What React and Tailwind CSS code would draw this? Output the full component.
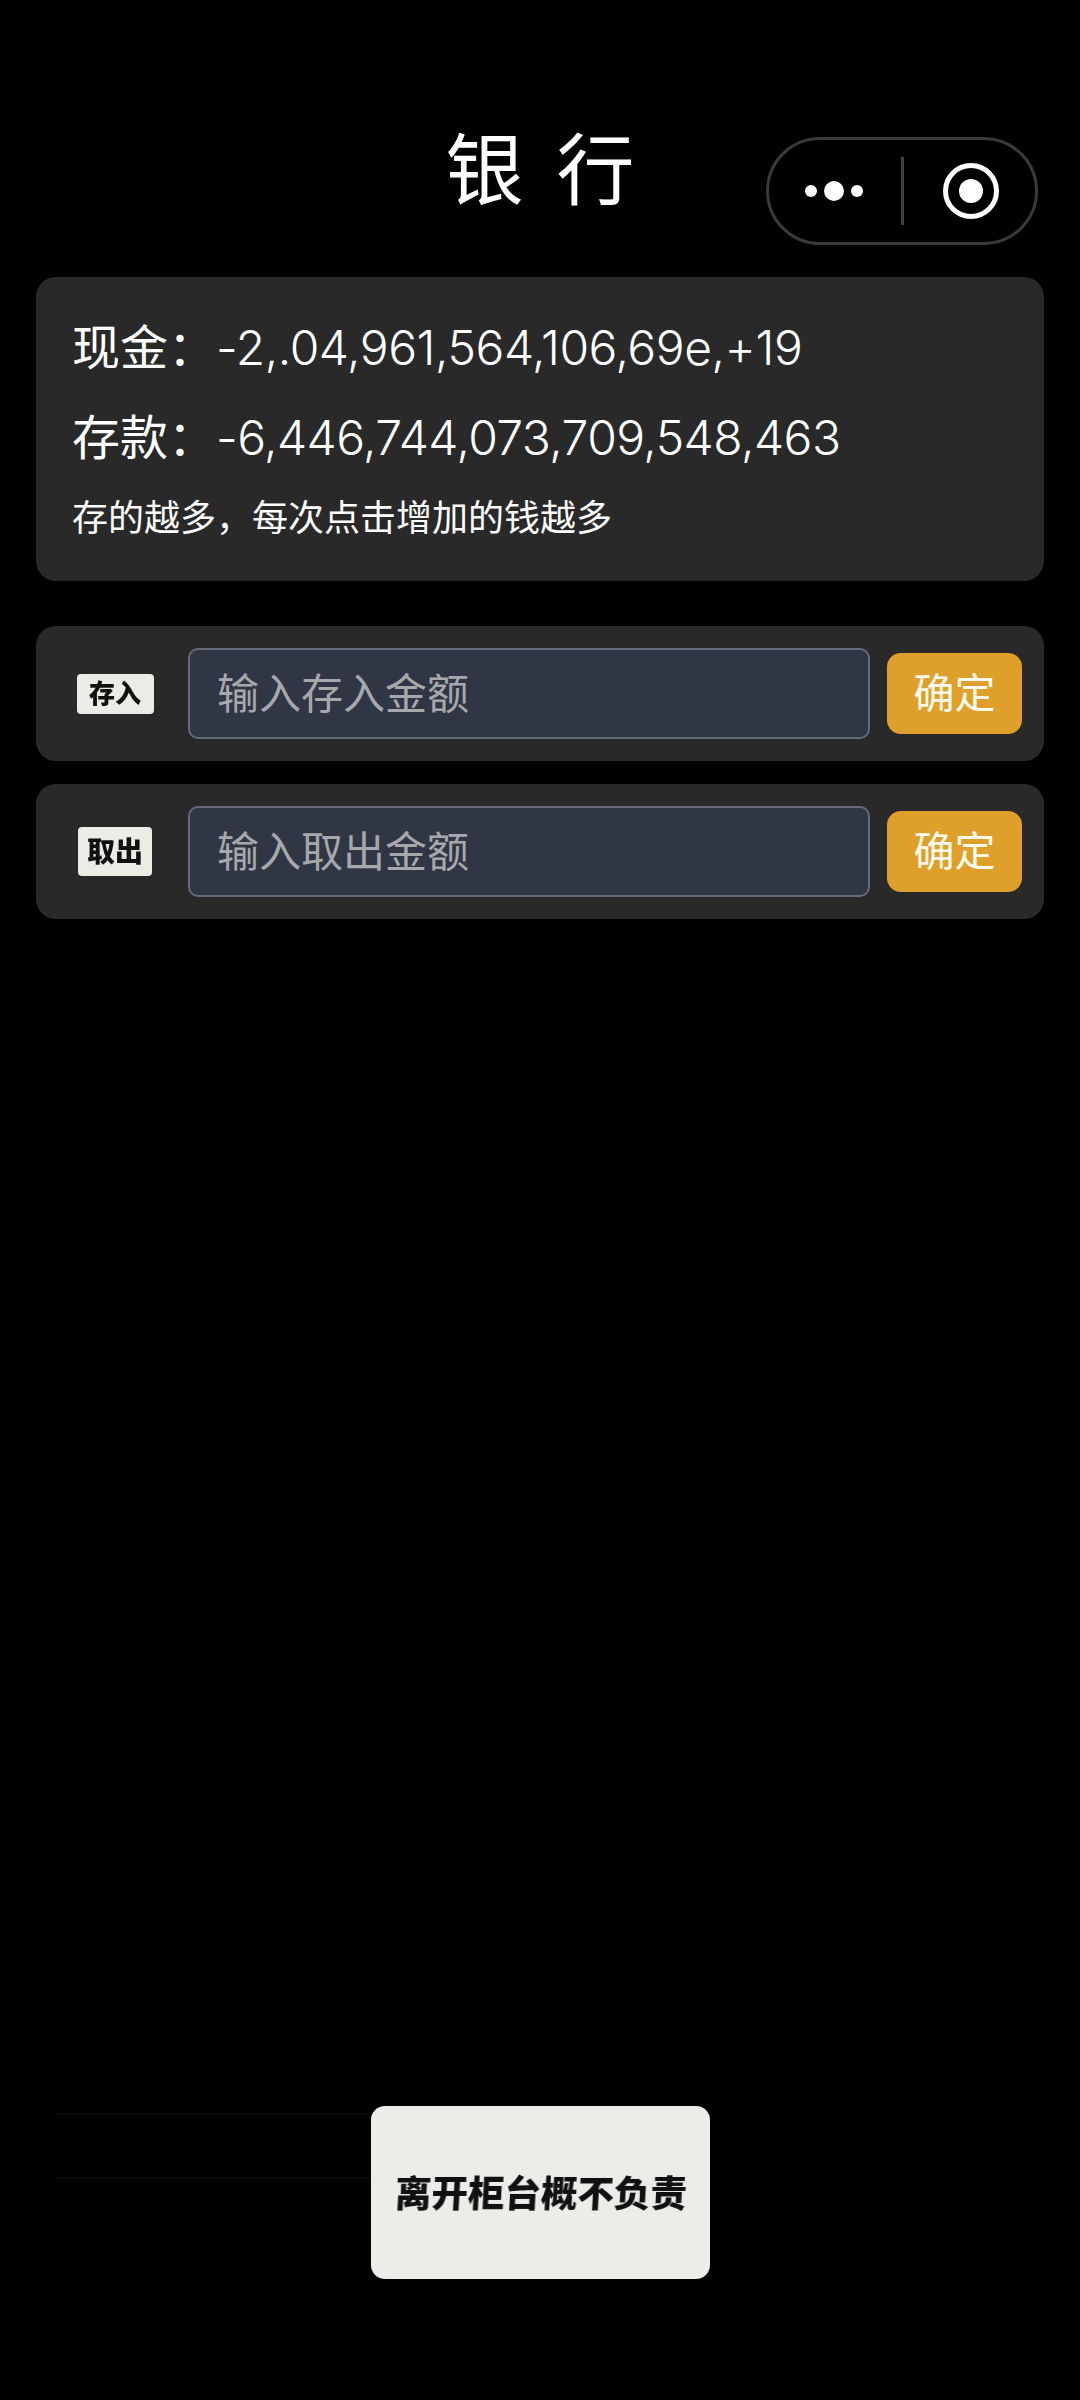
const sans = "font-['Inter','Noto_Sans_CJK_SC',sans-serif]";

function Capsule() {
  return (
    <div className="absolute left-[766px] top-[137px] flex h-[108px] w-[272px] items-center rounded-full border-[3px] border-[#3a3a3a]">
      <svg width="266" height="102" viewBox="0 0 266 102" className="block">
        <circle cx="42" cy="51" r="6" fill="#fff" />
        <circle cx="65" cy="51" r="10" fill="#fff" />
        <circle cx="88" cy="51" r="6" fill="#fff" />
        <rect x="132" y="17" width="3" height="68" fill="#3f3f3f" />
        <circle cx="202" cy="51" r="25.5" fill="none" stroke="#fff" strokeWidth="5" />
        <circle cx="202" cy="51" r="12" fill="#fff" />
      </svg>
    </div>
  );
}

function Row({ label, labelClass, placeholder, className }) {
  return (
    <div className={`flex h-[135px] items-center rounded-[20px] bg-[#292929] pl-[22px] pr-[22px] ${className}`}>
      <div className="flex w-[114px] shrink-0 justify-center">
        <div className={`flex items-center justify-center rounded-[4px] bg-[#ecece6] font-black text-[#111] ${labelClass}`}>
          <span className="blur-[0.4px]">{label}</span>
        </div>
      </div>
      <input
        readOnly
        placeholder={placeholder}
        className={`ml-[16px] h-[91px] w-[682px] shrink-0 rounded-[10px] border-2 border-[#646a7c] bg-[#303643] pl-[27px] text-[42px] text-white outline-none placeholder:text-[#a6a8ac] ${sans}`}
      />
      <button className="ml-[17px] flex h-[81px] w-[135px] shrink-0 items-center justify-center rounded-[14px] bg-[#dea02b] text-[41px] text-[#fffbee]">
        确定
      </button>
    </div>
  );
}

export default function App() {
  return (
    <div className={`relative min-h-[2400px] w-[1080px] overflow-hidden bg-black text-white ${sans}`}>
      <header className="flex h-[277px] justify-center pt-[126px]">
        <h1 className="text-[78px] leading-[90px] font-normal [word-spacing:11px]">银 行</h1>
      </header>
      <Capsule />
      <main className="px-[36px]">
        <section className="h-[304px] rounded-[20px] bg-[#292929] pl-[36px] pr-[37px] pt-[41px]">
          <p className="text-[48px] leading-[60px]">
            现金：<span className="font-light tracking-[-0.45px]">-2,.04,961,564,106,69e,+19</span>
          </p>
          <p className="mt-[30px] text-[48px] leading-[60px]">
            存款：<span className="font-light tracking-[-0.55px]">-6,446,744,073,709,548,463</span>
          </p>
          <p className="mt-[26px] text-[36px] leading-[48px]">存的越多，每次点击增加的钱越多</p>
        </section>
        <Row
          className="mt-[45px]"
          label="存入"
          labelClass="h-[40px] w-[77px] text-[26px]"
          placeholder="输入存入金额"
        />
        <Row
          className="mt-[23px]"
          label="取出"
          labelClass="h-[49px] w-[74px] text-[28px]"
          placeholder="输入取出金额"
        />
      </main>
      <div className="absolute left-[54px] top-[2113px] h-px w-[316px] bg-[#0b0b0b]" />
      <div className="absolute left-[54px] top-[2177px] h-px w-[316px] bg-[#0b0b0b]" />
      <div className="absolute left-[371px] top-[2106px] flex h-[173px] w-[339px] items-center justify-center rounded-[14px] bg-[#ecece8] pt-[3px] text-[36.5px] font-black whitespace-nowrap text-[#111]">
        <span className="-skew-x-3 blur-[0.4px]">离开柜台概不负责</span>
      </div>
    </div>
  );
}
